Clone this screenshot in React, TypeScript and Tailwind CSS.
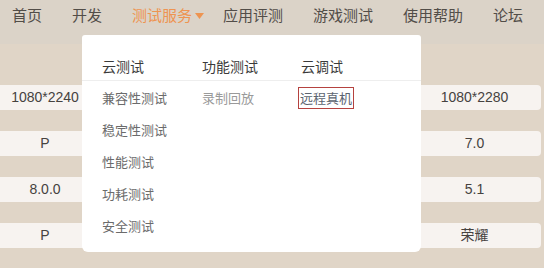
import React from 'react';

const NAV = ['首页', '开发', '测试服务', '应用评测', '游戏测试', '使用帮助', '论坛'];

const ROWS: [string, string][] = [
  ['1080*2240', '1080*2280'],
  ['P', '7.0'],
  ['8.0.0', '5.1'],
  ['P', '荣耀'],
];

const CLOUD_TEST = ['兼容性测试', '稳定性测试', '性能测试', '功耗测试', '安全测试'];

const font = { fontFamily: '"Noto Sans CJK SC", "Liberation Sans", sans-serif' };

const App: React.FC = () => {
  return (
    <div className="relative w-[544px] h-[268px] overflow-hidden bg-[#e0d5c7]" style={font}>
      {/* top nav */}
      <div className="h-[44px] bg-[#dbd3c8] flex items-start pt-[5px] pl-[12px] gap-[30px] text-[15px] leading-[20px] text-[#524d48]">
        {NAV.map(item =>
          item === '测试服务' ? (
            <div key={item} className="flex items-center text-[#ee9451] mr-[-11px]">
              {item}
              <svg width="9" height="6" viewBox="0 0 9 6" className="ml-[3px] mt-[1px]">
                <path d="M0 0 L9 0 L4.5 6 Z" fill="#ee9451" />
              </svg>
            </div>
          ) : (
            <div key={item}>{item}</div>
          )
        )}
      </div>

      {/* table behind the menu */}
      <div className="flex flex-col gap-[21px] pt-[41px] text-[14px] text-[#46423f]" style={{ fontFamily: '"Liberation Sans", "Noto Sans CJK SC", sans-serif' }}>
        {ROWS.map(([left, right], i) => (
          <div key={i} className="flex h-[25px]">
            <div className="w-[90px] bg-[#f7f3f0] flex items-center justify-center">{left}</div>
            <div className="flex-1" />
            <div className="w-[133px] mr-[3px] rounded-[4px] bg-[#f7f3f0] flex items-center justify-center">
              {right}
            </div>
          </div>
        ))}
      </div>

      {/* dropdown menu */}
      <div className="absolute left-[82px] top-[35px] w-[339px] h-[217px] bg-white rounded-t-[3px] rounded-b-[6px]">
        <div className="flex pl-[20px] pt-[21px] pb-[4px] border-b border-[#eeeeee] text-[14px] leading-[20px] text-[#3a3a3a]">
          <div className="w-[100px]">云测试</div>
          <div className="w-[99px]">功能测试</div>
          <div>云调试</div>
        </div>
        <div className="flex pl-[20px] pt-[1px] text-[13px]">
          <div className="w-[100px] flex flex-col text-[#6b6b6b]">
            {CLOUD_TEST.map(t => (
              <div key={t} className="h-[32px] flex items-center">
                {t}
              </div>
            ))}
          </div>
          <div className="w-[99px] text-[#9a9a9a]">
            <div className="h-[32px] flex items-center">录制回放</div>
          </div>
          <div className="text-[#5c6470]">
            <div className="h-[32px] flex items-center">
              <span className="ml-[-3px] px-[1px] leading-[20px] border border-[#b5423f]">远程真机</span>
            </div>
          </div>
        </div>
      </div>
    </div>
  );
};

export default App;
